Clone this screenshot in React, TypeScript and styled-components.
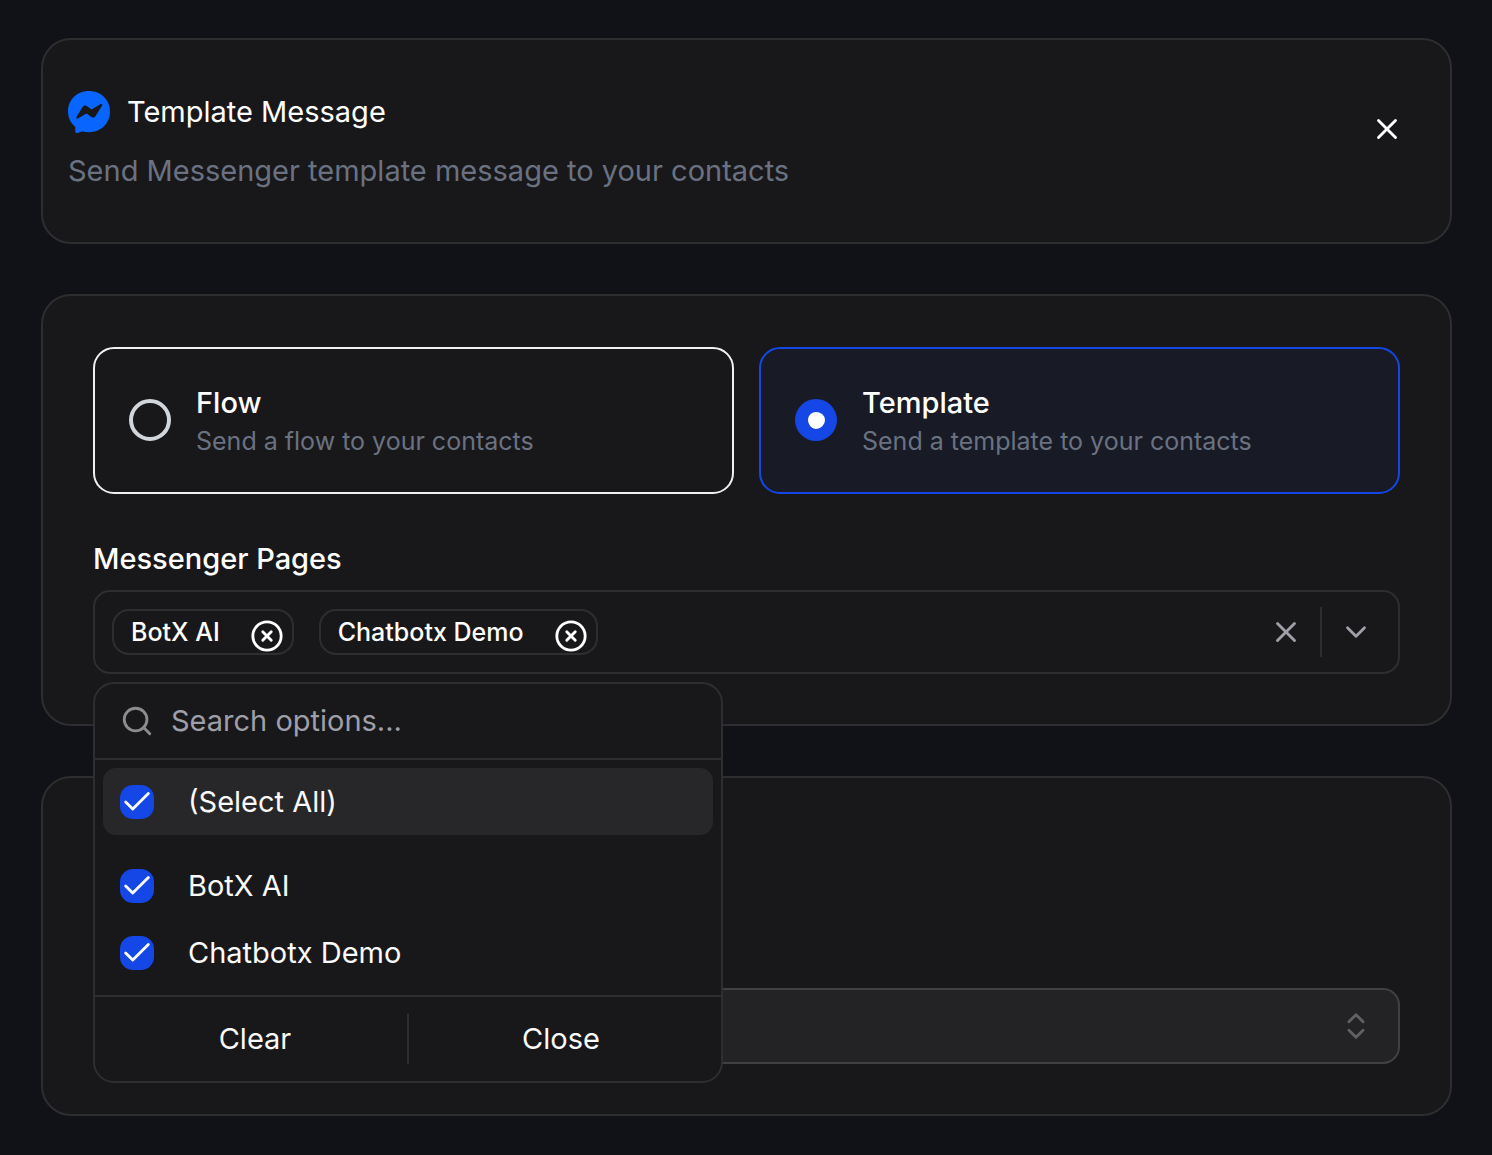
import React, { useState } from "react";
import styled, { createGlobalStyle } from "styled-components";
import { Check, ChevronDown, ChevronsUpDown, CircleX, Search, X } from "lucide-react";

const GlobalStyle = createGlobalStyle`
  * {
    box-sizing: border-box;
  }
  body {
    margin: 0;
    min-height: 100vh;
    background: #111217;
    color: #fafafa;
    font-family: Inter, "Liberation Sans", sans-serif;
    font-size: 29px;
    line-height: 42px;
  }
  button,
  input,
  select {
    font: inherit;
    color: inherit;
  }
`;

const Page = styled.main`
  display: flex;
  flex-direction: column;
  gap: 50px;
  padding: 38px 40px 38px 41px;
`;

const Card = styled.section`
  border: 2px solid #2e2e30;
  border-radius: 30px;
  background: #18181a;
  padding: 51px 50px 50px;
`;

const HeaderCard = styled(Card)`
  display: flex;
  justify-content: space-between;
  padding: 51px 25px 50px;
`;

const BlankCard = styled(Card)`
  display: flex;
  flex-direction: column;
  justify-content: flex-end;
  min-height: 340px;
`;

const Heading = styled.div`
  display: flex;
  flex-direction: column;
  gap: 17px;
`;

const TitleRow = styled.div`
  display: flex;
  align-items: center;
  gap: 17px;
`;

const Title = styled.h1`
  margin: 0;
  font-size: inherit;
  font-weight: 400;
  color: #ffffff;
`;

const Description = styled.p`
  margin: 0;
  color: #6a7282;
`;

const IconButton = styled.button<{ $size: number; $color: string }>`
  display: inline-flex;
  align-items: center;
  justify-content: center;
  flex: none;
  width: ${(p) => p.$size}px;
  height: ${(p) => p.$size}px;
  padding: 0;
  border: 0;
  background: transparent;
  color: ${(p) => p.$color};
  cursor: pointer;
`;

const Options = styled.div`
  display: grid;
  grid-template-columns: 1fr 1fr;
  gap: 25px;
`;

const Option = styled.label<{ $active: boolean }>`
  display: flex;
  align-items: center;
  gap: 25px;
  padding: 33px 34px 34px;
  border: 2px solid ${(p) => (p.$active ? "#1447e6" : "#f0f0f1")};
  border-radius: 21px;
  background: ${(p) => (p.$active ? "#181a25" : "transparent")};
  cursor: pointer;
`;

const Radio = styled.input`
  appearance: none;
  flex: none;
  width: 42px;
  height: 42px;
  margin: 0;
  border: 4px solid #d1d5dc;
  border-radius: 50%;
  &:checked {
    border: 13px solid #1447e6;
    border-width: 13px 12px 12px 13px;
    background: #ffffff;
  }
`;

const OptionText = styled.span`
  display: flex;
  flex-direction: column;
`;

const OptionTitle = styled.span`
  font-weight: 500;
  color: #ffffff;
`;

const OptionHint = styled.span`
  font-size: 25px;
  line-height: 34px;
  color: #6a7282;
`;

const Field = styled.div`
  position: relative;
  margin-top: 44px;
`;

const FieldLabel = styled.div`
  margin-bottom: 10px;
  font-weight: 500;
  color: #ffffff;
`;

const Picker = styled.div`
  display: flex;
  align-items: center;
  gap: 17px;
  min-height: 84px;
  padding: 0 25px 0 17px;
  border: 2px solid #2e2e30;
  border-radius: 17px;
`;

const Chips = styled.div`
  display: flex;
  flex: 1;
  flex-wrap: wrap;
  gap: 25px;
`;

const Chip = styled.span`
  display: flex;
  align-items: flex-end;
  gap: 30px;
  height: 46px;
  padding: 0 8px 0 17px;
  border: 2px solid #2e2e30;
  border-radius: 17px;
  font-size: 25px;
  font-weight: 500;
  color: #ffffff;
`;

const Divider = styled.span`
  flex: none;
  width: 2px;
  height: 50px;
  background: #2e2e30;
`;

const Popover = styled.div`
  position: absolute;
  top: calc(100% + 8px);
  left: 0;
  z-index: 1;
  width: 630px;
  border: 2px solid #2e2e30;
  border-radius: 21px;
  background: #18181a;
`;

const SearchRow = styled.label`
  display: flex;
  align-items: center;
  gap: 17px;
  height: 76px;
  padding: 0 25px;
  border-bottom: 2px solid #2e2e30;
  color: #8c8c8c;
`;

const SearchInput = styled.input`
  flex: 1;
  min-width: 0;
  padding: 0;
  border: 0;
  outline: 0;
  background: transparent;
  &::placeholder {
    color: #9f9fa9;
    opacity: 1;
  }
`;

const List = styled.div`
  display: flex;
  flex-direction: column;
  gap: 17px;
  padding: 8px 8px 9px;
`;

const Item = styled.label<{ $highlighted?: boolean }>`
  display: flex;
  align-items: center;
  gap: 34px;
  height: 67px;
  padding: 0 17px;
  border-radius: 13px;
  background: ${(p) => (p.$highlighted ? "#27272a" : "transparent")};
  cursor: pointer;
`;

const Box = styled.span`
  display: grid;
  flex: none;
  width: 34px;
  height: 34px;
  > * {
    grid-area: 1 / 1;
  }
  svg {
    pointer-events: none;
  }
`;

const BoxInput = styled.input`
  appearance: none;
  width: 34px;
  height: 34px;
  margin: 0;
  border: 2px solid #1447e6;
  border-radius: 13px;
  &:checked {
    background: #1447e6;
  }
  &:not(:checked) + svg {
    visibility: hidden;
  }
`;

const Footer = styled.div`
  display: flex;
  align-items: center;
  height: 86px;
  padding: 0 8px;
  border-top: 2px solid #2e2e30;
`;

const FooterButton = styled.button`
  flex: 1;
  height: 67px;
  padding: 0;
  border: 0;
  background: transparent;
  cursor: pointer;
`;

const SelectWrap = styled.div`
  display: grid;
  align-items: center;
  > * {
    grid-area: 1 / 1;
  }
  svg {
    justify-self: end;
    margin-right: 27px;
    color: #606065;
    pointer-events: none;
  }
`;

const Select = styled.select`
  appearance: none;
  width: 100%;
  height: 76px;
  padding: 0 76px 0 25px;
  border: 2px solid #404042;
  border-radius: 17px;
  background: #232325;
  opacity: 1;
`;

const MessengerLogo = () => (
  <svg width="42" height="42" viewBox="0 0 42 42" fill="#0866ff" fillRule="evenodd" aria-hidden="true">
    <path d="M21 0C9.2 0 0 8.6 0 20.3c0 6.1 2.5 11.400 6.600 15 .4.3.6.8.6 1.300l.1 4c0 1.200 1.200 1.800 2.200 1.300l4.300-1.400c.4-.1.800-.2 1.200-.1 1.900.5 3.900.8 6 .8 11.800 0 21-8.700 21-20.700C42 8.600 32.800 0 21 0zM8.500 26.100l6.100-10.200c1-1.600 2.800-2 4.300-.9l3.800 3c.6.4 1.200.4 1.800.1l8.200-5c1-.6 2 .4 1.400 1.400l-6.500 10.600c-1 1.600-2.800 2-4.300.9l-3.900-2.900c-.6-.4-1.200-.4-1.800-.1l-7.700 4.500c-1 .6-2-.4-1.400-1.400z" />
  </svg>
);

const pages = ["BotX AI", "Chatbotx Demo"];
const kinds = [
  { id: "flow", title: "Flow", hint: "Send a flow to your contacts" },
  { id: "template", title: "Template", hint: "Send a template to your contacts" },
];

type TickProps = { label: string; checked: boolean; highlighted?: boolean; onChange: () => void };

const TickItem = ({ label, checked, highlighted, onChange }: TickProps) => (
  <Item $highlighted={highlighted}>
    <Box>
      <BoxInput type="checkbox" checked={checked} onChange={onChange} />
      <Check size={34} />
    </Box>
    {label}
  </Item>
);

export default function App() {
  const [kind, setKind] = useState("template");
  const [selected, setSelected] = useState(pages);
  const [open, setOpen] = useState(true);
  const [query, setQuery] = useState("");

  const toggle = (page: string) =>
    setSelected(pages.filter((p) => (p === page ? !selected.includes(p) : selected.includes(p))));
  const all = selected.length === pages.length;

  return (
    <>
      <GlobalStyle />
      <Page>
        <HeaderCard>
          <Heading>
            <TitleRow>
              <MessengerLogo />
              <Title>Template Message</Title>
            </TitleRow>
            <Description>Send Messenger template message to your contacts</Description>
          </Heading>
          <IconButton type="button" aria-label="Close" $size={76} $color="#ffffff">
            <X size={34} />
          </IconButton>
        </HeaderCard>

        <Card>
          <Options role="radiogroup" aria-label="Message type">
            {kinds.map((k) => (
              <Option key={k.id} $active={kind === k.id}>
                <Radio type="radio" name="kind" checked={kind === k.id} onChange={() => setKind(k.id)} />
                <OptionText>
                  <OptionTitle>{k.title}</OptionTitle>
                  <OptionHint>{k.hint}</OptionHint>
                </OptionText>
              </Option>
            ))}
          </Options>

          <Field role="group" aria-labelledby="pages-label">
            <FieldLabel id="pages-label">Messenger Pages</FieldLabel>
            <Picker>
              <Chips>
                {selected.map((page) => (
                  <Chip key={page}>
                    {page}
                    <IconButton
                      type="button"
                      aria-label={`Remove ${page}`}
                      $size={34}
                      $color="#ffffff"
                      onClick={() => toggle(page)}
                    >
                      <CircleX size={34} />
                    </IconButton>
                  </Chip>
                ))}
              </Chips>
              <IconButton
                type="button"
                aria-label="Clear pages"
                $size={34}
                $color="#9f9fa9"
                onClick={() => setSelected([])}
              >
                <X size={34} />
              </IconButton>
              <Divider />
              <IconButton
                type="button"
                aria-label="Show pages"
                aria-expanded={open}
                $size={34}
                $color="#9f9fa9"
                onClick={() => setOpen(!open)}
              >
                <ChevronDown size={34} />
              </IconButton>
            </Picker>
            {open && (
              <Popover>
                <SearchRow>
                  <Search size={34} />
                  <SearchInput
                    aria-label="Search options"
                    placeholder="Search options..."
                    value={query}
                    onChange={(e) => setQuery(e.target.value)}
                  />
                </SearchRow>
                <List>
                  <TickItem
                    label="(Select All)"
                    checked={all}
                    highlighted
                    onChange={() => setSelected(all ? [] : pages)}
                  />
                  <div>
                    {pages
                      .filter((p) => p.toLowerCase().includes(query.toLowerCase()))
                      .map((p) => (
                        <TickItem key={p} label={p} checked={selected.includes(p)} onChange={() => toggle(p)} />
                      ))}
                  </div>
                </List>
                <Footer>
                  <FooterButton type="button" onClick={() => setSelected([])}>
                    Clear
                  </FooterButton>
                  <Divider />
                  <FooterButton type="button" onClick={() => setOpen(false)}>
                    Close
                  </FooterButton>
                </Footer>
              </Popover>
            )}
          </Field>
        </Card>

        <BlankCard>
          <SelectWrap>
            <Select disabled aria-label="Template" />
            <ChevronsUpDown size={34} />
          </SelectWrap>
        </BlankCard>
      </Page>
    </>
  );
}
